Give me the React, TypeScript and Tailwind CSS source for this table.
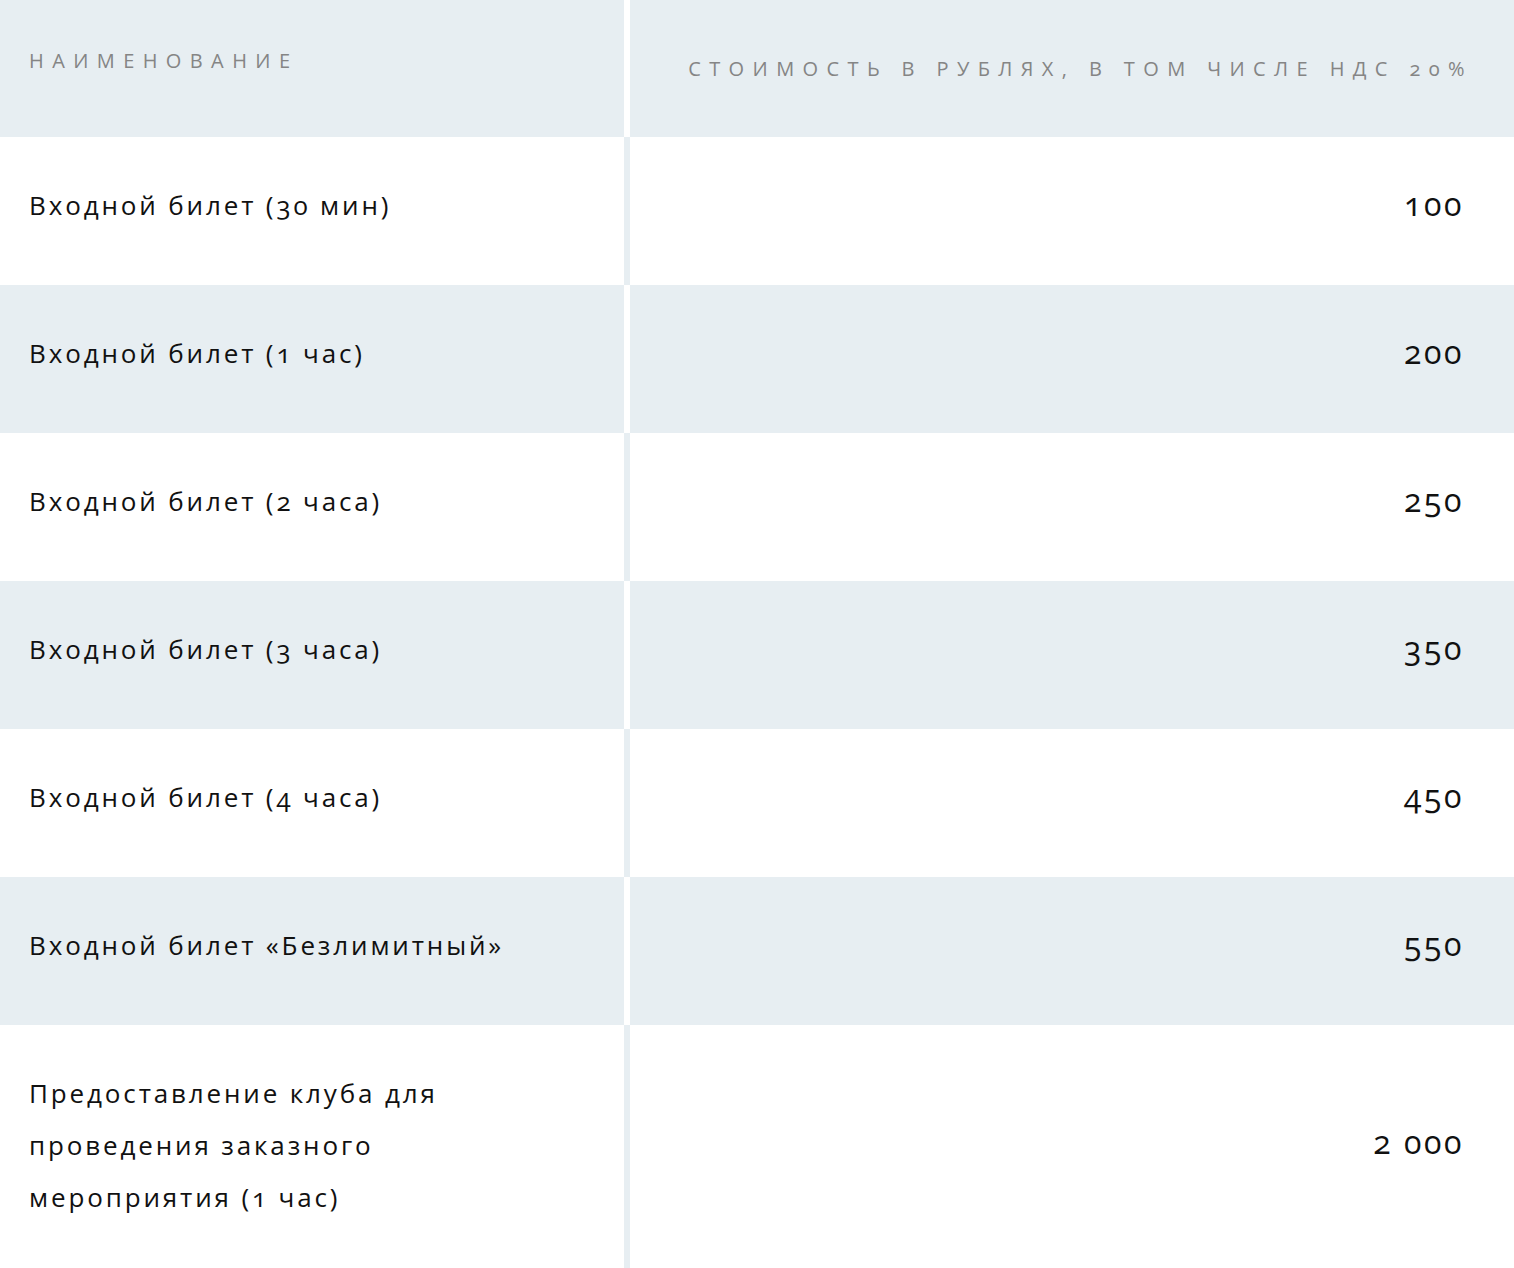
const rows: { name: string; price: string }[] = [
  { name: "Входной билет (30 мин)", price: "100" },
  { name: "Входной билет (1 час)", price: "200" },
  { name: "Входной билет (2 часа)", price: "250" },
  { name: "Входной билет (3 часа)", price: "350" },
  { name: "Входной билет (4 часа)", price: "450" },
  { name: "Входной билет «Безлимитный»", price: "550" },
  { name: "Предоставление клуба для проведения заказного мероприятия (1 час)", price: "2 000" },
];

export default function App() {
  return (
    <div className="min-h-screen bg-white font-['Open_Sans',sans-serif] text-[#111]">
      <div className="grid grid-cols-[624px_1fr] gap-x-[6px] bg-white">
        <div className="flex h-[137px] items-center bg-[#e7eef2] pl-[29px] pb-[16px] text-[20px] font-medium uppercase tracking-[0.42em] text-[#858585]">
          Наименование
        </div>
        <div className="flex h-[137px] items-center justify-end bg-[#e7eef2] pr-[41px] text-[20px] font-medium uppercase tracking-[0.42em] text-[#858585] oldstyle-nums">
          Стоимость в рублях, в том числе НДС 20%
        </div>
      </div>
      {rows.map((row, i) => {
        const shaded = i % 2 === 1;
        const last = i === rows.length - 1;
        return (
          <div
            key={row.name}
            className={
              "grid grid-cols-[624px_1fr] gap-x-[6px] " +
              (shaded ? "bg-white" : "bg-[#e7eef2]")
            }
          >
            <div
              className={
                "flex items-center pl-[29px] text-[26px] leading-[52px] tracking-[0.11em] oldstyle-nums " +
                (shaded ? "bg-[#e7eef2] " : "bg-white ") +
                (last ? "pt-[42px] pb-[54px] pr-[100px]" : "h-[148px] pb-[12px]")
              }
            >
              {row.name}
            </div>
            <div
              className={
                "flex items-center justify-end pr-[50px] text-[32px] tracking-[0.08em] oldstyle-nums " +
                (shaded ? "bg-[#e7eef2] " : "bg-white ") +
                (last ? "pb-[18px]" : "pb-[14px]")
              }
            >
              {row.price}
            </div>
          </div>
        );
      })}
    </div>
  );
}
